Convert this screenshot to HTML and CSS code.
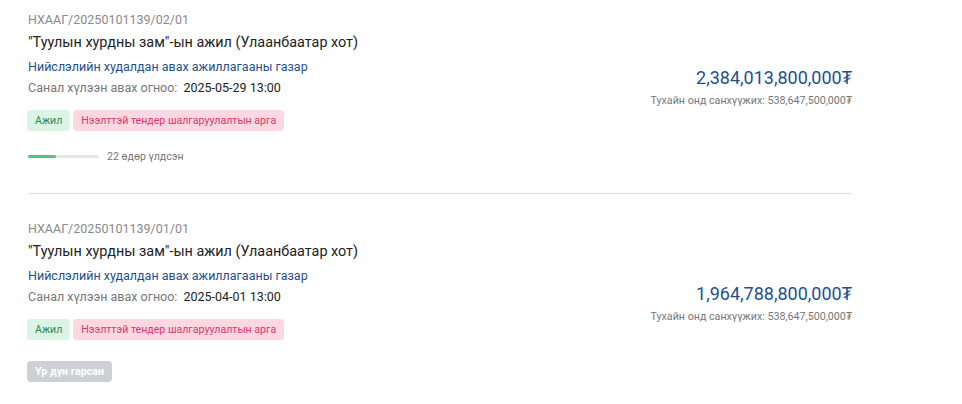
FILE: index.html
```html
<!DOCTYPE html>
<html lang="mn">
<head>
  <meta charset="UTF-8">
  <meta name="viewport" content="width=device-width, initial-scale=1.0">
  <title>Тендерүүд</title>
  <link rel="stylesheet" href="styles.css">
</head>
<body>
  <div class="list">
    <div class="item">
      <div class="info">
        <div class="code">НХААГ/20250101139/02/01</div>
        <div class="title">"Туулын хурдны зам"-ын ажил (Улаанбаатар хот)</div>
        <div class="org">Нийслэлийн худалдан авах ажиллагааны газар</div>
        <div class="date"><span class="label">Санал хүлээн авах огноо:</span> 2025-05-29 13:00</div>
        <div class="tags">
          <span class="tag green">Ажил</span>
          <span class="tag pink">Нээлттэй тендер шалгаруулалтын арга</span>
        </div>
        <div class="progress">
          <div class="bar"><div class="fill" style="width: 40%"></div></div>
          <span class="left">22 өдөр үлдсэн</span>
        </div>
      </div>
      <div class="money">
        <div class="amount">2,384,013,800,000₮</div>
        <div class="sub">Тухайн онд санхүүжих: 538,647,500,000₮</div>
      </div>
    </div>

    <div class="item">
      <div class="info">
        <div class="code">НХААГ/20250101139/01/01</div>
        <div class="title">"Туулын хурдны зам"-ын ажил (Улаанбаатар хот)</div>
        <div class="org">Нийслэлийн худалдан авах ажиллагааны газар</div>
        <div class="date"><span class="label">Санал хүлээн авах огноо:</span> 2025-04-01 13:00</div>
        <div class="tags">
          <span class="tag green">Ажил</span>
          <span class="tag pink">Нээлттэй тендер шалгаруулалтын арга</span>
        </div>
        <div class="status">Үр дүн гарсан</div>
      </div>
      <div class="money">
        <div class="amount">1,964,788,800,000₮</div>
        <div class="sub">Тухайн онд санхүүжих: 538,647,500,000₮</div>
      </div>
    </div>
  </div>
</body>
</html>
```

FILE: styles.css
```css
body { margin: 0; padding: 0 110px 0 28px; font-family: Roboto, "Noto Sans", sans-serif; color: #222; background: #fff; }
.list { width: 824px; }
.item { display: flex; justify-content: space-between; align-items: center; padding: 25px 0 29px; border-bottom: 1px solid #dcdcdc; }
.item:first-child { padding-top: 10px; }
.item:last-child { border-bottom: none; padding-bottom: 21px; }
.code { font-size: 12.5px; line-height: 20px; color: #8a8a8a; margin-bottom: 2px; }
.title { font-size: 14.4px; line-height: 22px; color: #222; margin-bottom: 2px; }
.org { font-size: 12.5px; line-height: 22px; color: #1f4f8f; }
.date { font-size: 12.5px; line-height: 20px; color: #222; }
.date .label { color: #777; margin-right: 3px; }
.tags { display: flex; gap: 3px; margin-top: 12px; margin-left: -1px; }
.tag { font-size: 10.6px; line-height: 21px; padding: 0 8px; border-radius: 4px; }
.tag.green { background: #dcf4e6; color: #2f8a57; }
.tag.pink { background: #fdd8e2; color: #d9366c; }
.progress { display: flex; align-items: center; gap: 8px; margin-top: 17px; height: 16px; }
.bar { width: 71px; height: 3px; background: #e6e6e6; border-radius: 2px; }
.fill { height: 3px; background: #4fc487; border-radius: 2px; }
.left { font-size: 10.6px; color: #777; }
.status { display: inline-block; margin-top: 21px; margin-left: -1px; font-size: 10.6px; font-weight: bold; line-height: 21px; padding: 0 8px; color: #fff; background: #cdd1d6; border-radius: 4px; }
.money { text-align: right; }
.amount { font-size: 18px; line-height: 24px; color: #1f4f8f; }
.sub { font-size: 10.7px; line-height: 16px; color: #777; margin-top: 3px; }
.item:last-child .money { margin-top: 6px; }
```
